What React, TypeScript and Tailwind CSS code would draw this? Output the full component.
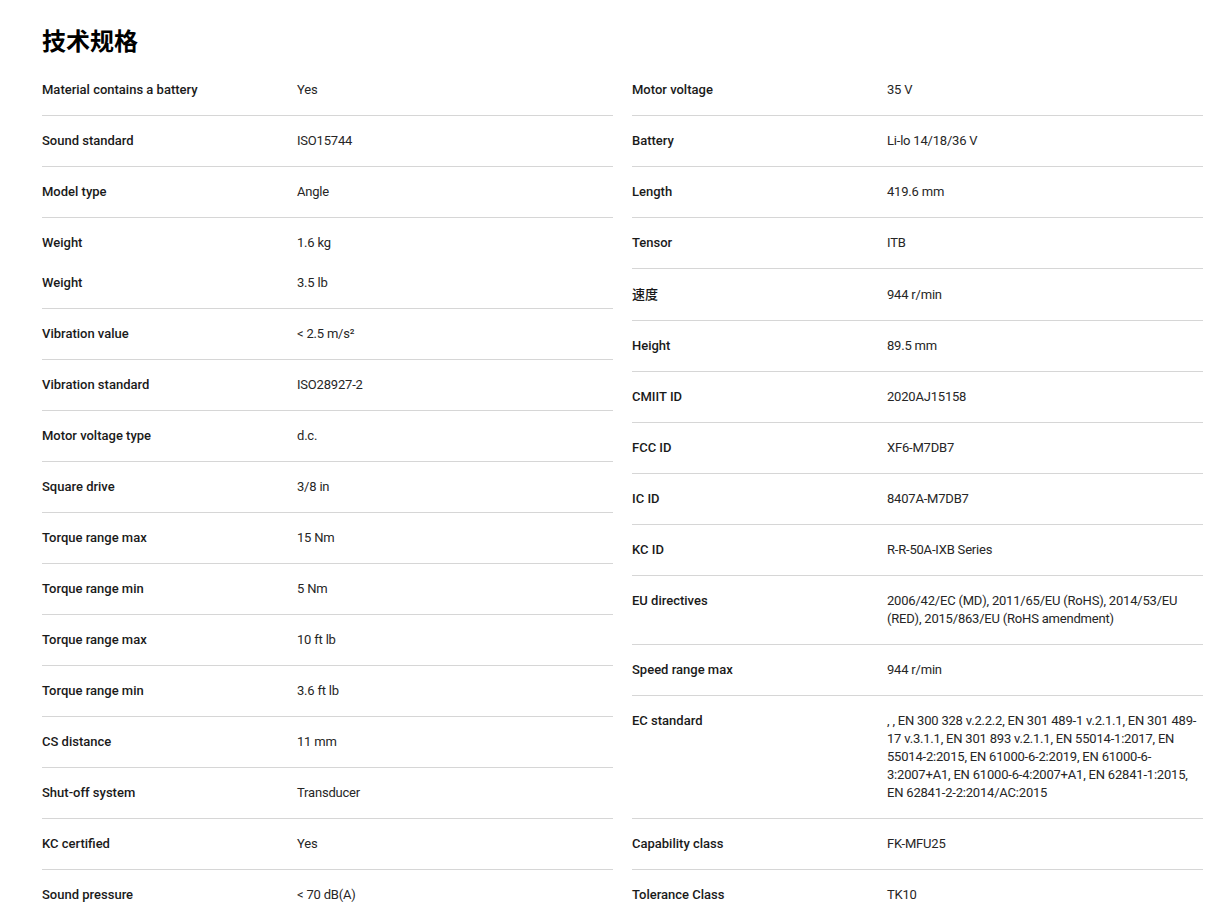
type Spec = { label: string; values: string[]; tall?: boolean };

const leftSpecs: Spec[] = [
  { label: "Material contains a battery", values: ["Yes"] },
  { label: "Sound standard", values: ["ISO15744"] },
  { label: "Model type", values: ["Angle"] },
  { label: "Weight", values: ["1.6 kg", "3.5 lb"] },
  { label: "Vibration value", values: ["< 2.5 m/s²"] },
  { label: "Vibration standard", values: ["ISO28927-2"] },
  { label: "Motor voltage type", values: ["d.c."] },
  { label: "Square drive", values: ["3/8 in"] },
  { label: "Torque range max", values: ["15 Nm"] },
  { label: "Torque range min", values: ["5 Nm"] },
  { label: "Torque range max", values: ["10 ft lb"] },
  { label: "Torque range min", values: ["3.6 ft lb"] },
  { label: "CS distance", values: ["11 mm"] },
  { label: "Shut-off system", values: ["Transducer"] },
  { label: "KC certified", values: ["Yes"] },
  { label: "Sound pressure", values: ["< 70 dB(A)"] },
];

const rightSpecs: Spec[] = [
  { label: "Motor voltage", values: ["35 V"] },
  { label: "Battery", values: ["Li-lo 14/18/36 V"] },
  { label: "Length", values: ["419.6 mm"] },
  { label: "Tensor", values: ["ITB"] },
  { label: "速度", values: ["944 r/min"], tall: true },
  { label: "Height", values: ["89.5 mm"] },
  { label: "CMIIT ID", values: ["2020AJ15158"] },
  { label: "FCC ID", values: ["XF6-M7DB7"] },
  { label: "IC ID", values: ["8407A-M7DB7"] },
  { label: "KC ID", values: ["R-R-50A-IXB Series"] },
  {
    label: "EU directives",
    values: ["2006/42/EC (MD), 2011/65/EU (RoHS), 2014/53/EU (RED), 2015/863/EU (RoHS amendment)"],
  },
  { label: "Speed range max", values: ["944 r/min"] },
  {
    label: "EC standard",
    values: [
      ", , EN 300 328 v.2.2.2, EN 301 489-1 v.2.1.1, EN 301 489-17 v.3.1.1, EN 301 893 v.2.1.1, EN 55014-1:2017, EN 55014-2:2015, EN 61000-6-2:2019, EN 61000-6-3:2007+A1, EN 61000-6-4:2007+A1, EN 62841-1:2015, EN 62841-2-2:2014/AC:2015",
    ],
  },
  { label: "Capability class", values: ["FK-MFU25"] },
  { label: "Tolerance Class", values: ["TK10"] },
];

function SpecRow({ spec }: { spec: Spec }) {
  return (
    <div
      className={`flex flex-col gap-[22px] py-4 border-b border-[#d6d6d6] ${
        spec.tall ? "leading-[19px]" : ""
      }`}
    >
      {spec.values.map((v, i) => (
        <div key={i} className="flex">
          <div className="w-[255px] shrink-0 font-medium tracking-normal text-[#1a1a1a]">{spec.label}</div>
          <div className="flex-1 text-[#262626]">{v}</div>
        </div>
      ))}
    </div>
  );
}

export default function App() {
  return (
    <div
      className="bg-white min-h-screen pl-[42px] pr-[4px] pt-6 text-[13px] leading-[18px] tracking-[-0.2px]"
      style={{ fontFamily: "Roboto, 'Noto Sans CJK SC', sans-serif" }}
    >
      <h2
        className="text-[24px] leading-8 font-bold text-black mb-[9px] tracking-normal"
        style={{ fontFamily: "'Noto Sans CJK SC', sans-serif" }}
      >
        技术规格
      </h2>
      <div className="grid grid-cols-2 gap-x-[19px] items-start">
        <div className="flex flex-col">
          {leftSpecs.map((s, i) => (
            <SpecRow key={i} spec={s} />
          ))}
        </div>
        <div className="flex flex-col">
          {rightSpecs.map((s, i) => (
            <SpecRow key={i} spec={s} />
          ))}
        </div>
      </div>
    </div>
  );
}
